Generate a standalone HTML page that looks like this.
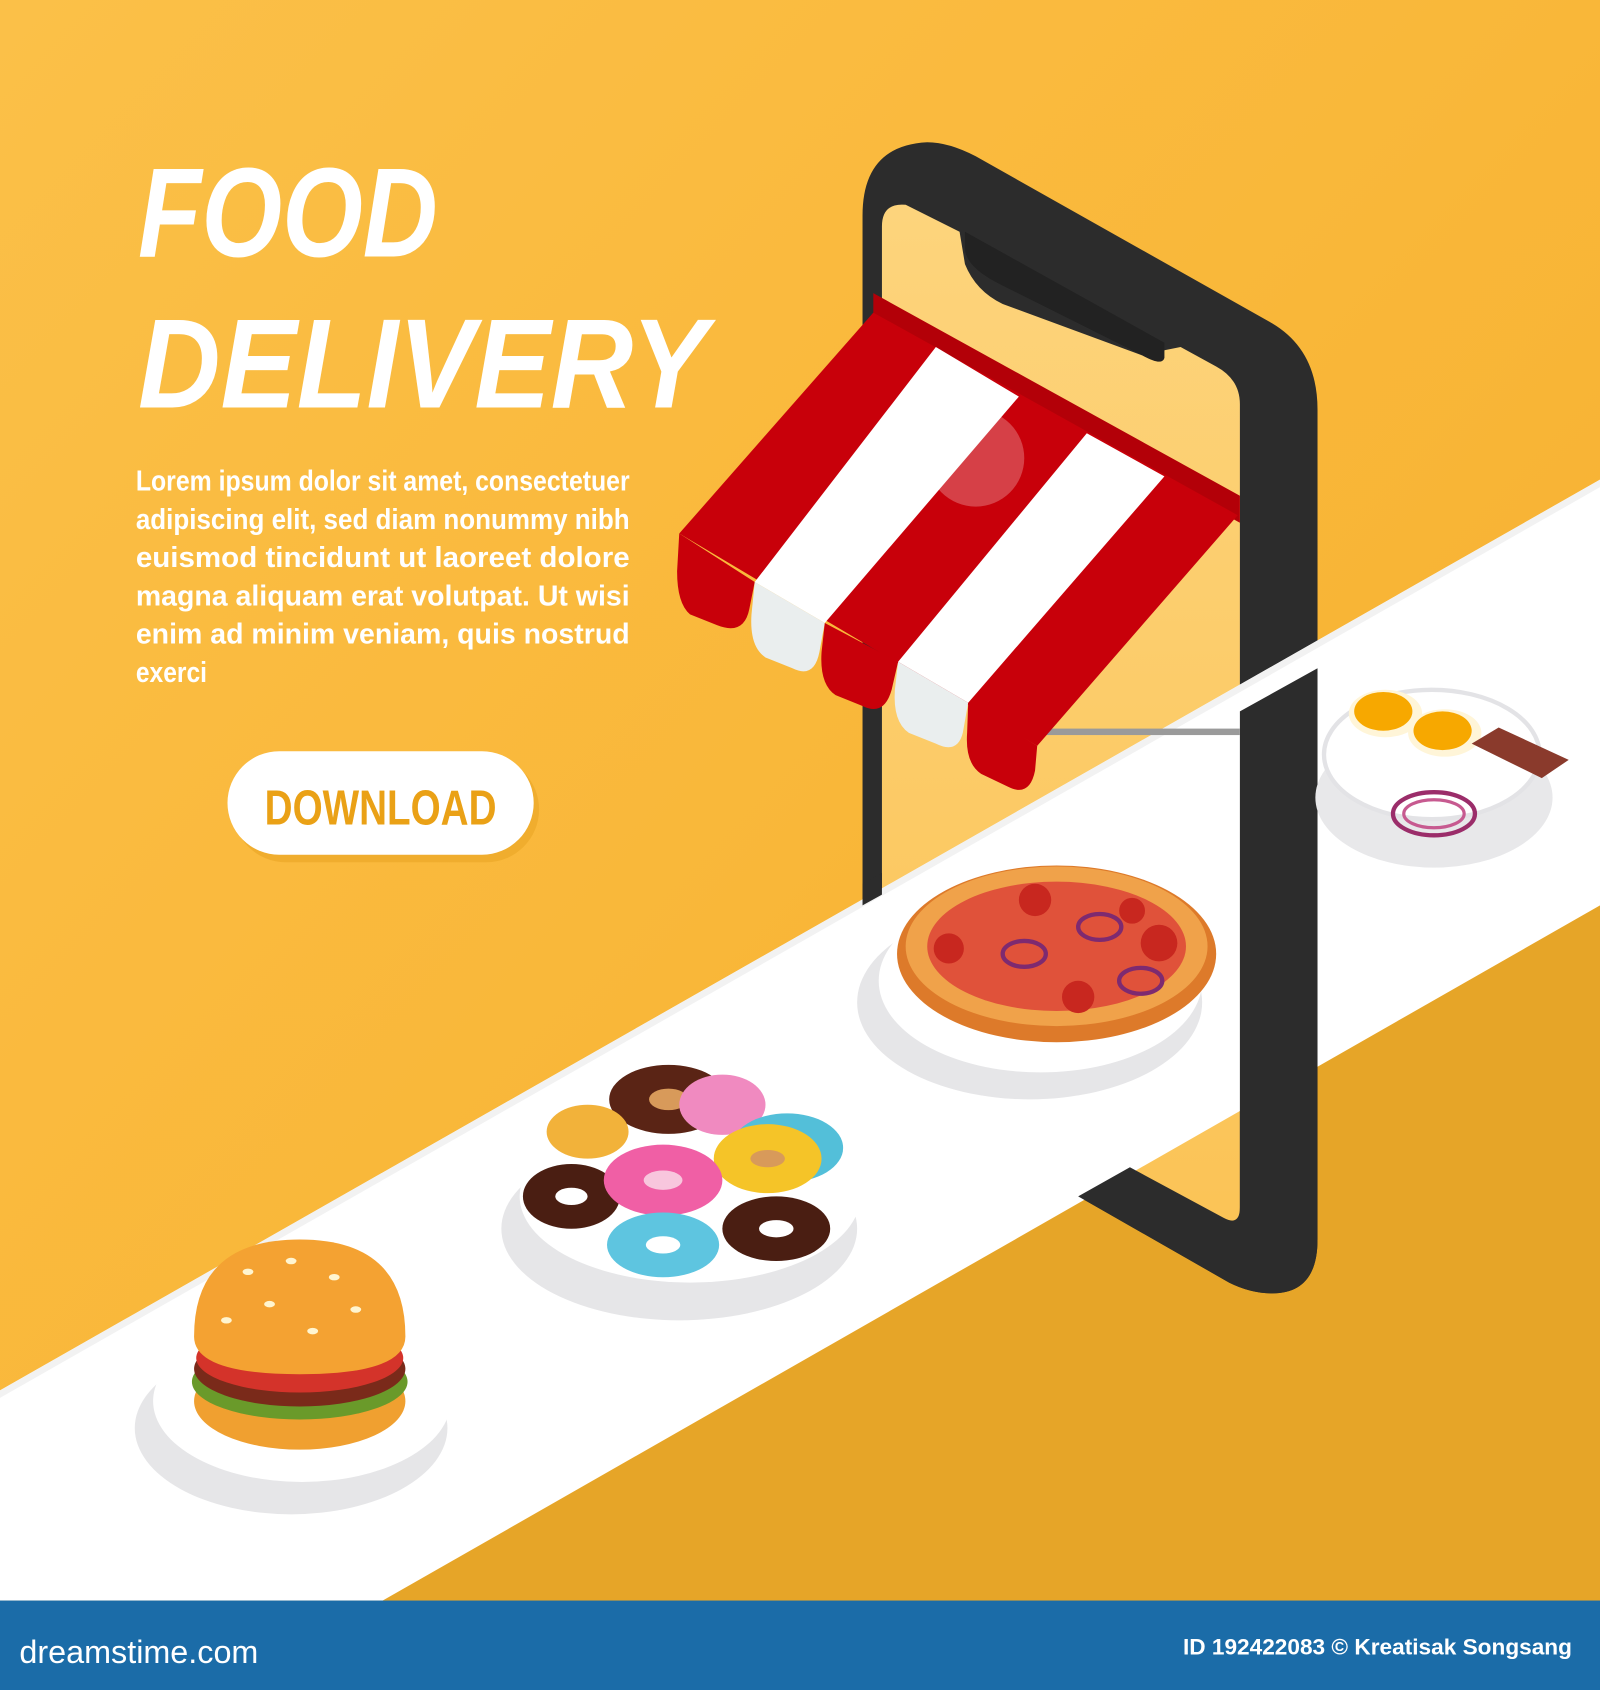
<!DOCTYPE html>
<html><head><meta charset="utf-8"><style>
html,body{margin:0;padding:0;width:1600px;height:1690px;overflow:hidden;background:#f8b739}
svg{display:block}
</style></head><body>
<svg width="1600" height="1690" viewBox="0 0 1484 1568" preserveAspectRatio="none" xmlns="http://www.w3.org/2000/svg">
<defs>
<linearGradient id="bg" x1="0" y1="0" x2="1" y2="1">
<stop offset="0" stop-color="#fbc048"/><stop offset="0.5" stop-color="#f9b739"/><stop offset="1" stop-color="#f6ad2c"/>
</linearGradient>
<linearGradient id="scr" x1="0" y1="0" x2="0" y2="1">
<stop offset="0" stop-color="#fdd47c"/><stop offset="1" stop-color="#fbc355"/>
</linearGradient>
</defs>
<rect width="1484" height="1568" fill="url(#bg)"/>
<polygon points="355,1485 1484,840 1484,1485" fill="#e6a528"/>
<path d="M800,200 Q800,135 860,132 Q880,132 905,145 L1180,300 Q1222,325 1222,380 L1222,1150 Q1222,1200 1180,1200 Q1160,1200 1140,1190 L1000,1110 L800,1000 Z" fill="#2c2c2c"/>
<path d="M818,210 Q818,188 840,190 L890,215 L895,245 Q905,270 930,282 L1060,330 Q1075,338 1080,325 L1095,322 L1128,340 Q1150,352 1150,375 L1150,1160 Q1150,1170 1135,1162 L1000,1090 L818,990 Z" fill="url(#scr)"/>
<path d="M895,215 L1080,318 L1080,332 Q1078,340 1060,330 L930,265 Q895,248 895,230 Z" fill="#222"/>
<polygon points="0,1290 1484,445 1484,840 355,1485 0,1485" fill="#ffffff"/>
<polygon points="0,1290 1484,445 1484,452 0,1297" fill="#f2f2f2"/>
<path d="M1150,660 L1222,620 L1222,1150 Q1222,1200 1180,1200 Q1160,1200 1140,1190 L1000,1110 L1048,1083 L1135,1130 Q1150,1138 1150,1120 Z" fill="#2c2c2c"/>
<path d="M800,820 L818,810 L818,830 L800,840 Z" fill="#2c2c2c"/>
<rect x="966" y="676" width="184" height="6" fill="#9a9a9a"/>
<!-- awning -->
<polygon points="810,272 1150,460 1150,485 810,297" fill="#b30008"/>
<polygon points="810,290 1148,478 962,692 630,495" fill="#c8000a"/>
<polygon points="868,322 945,368 765,578 700,540" fill="#fff"/>
<polygon points="1008,402 1080,442 898,652 833,614" fill="#fff"/>
<path d="M630,495 L700,540 L695,565 Q690,590 665,580 L640,570 Q628,560 628,530 Z" fill="#c8000a"/>
<path d="M700,540 L765,578 L760,605 Q755,630 735,620 L710,610 Q695,600 697,570 Z" fill="#eaeeee"/>
<path d="M765,578 L833,614 L827,640 Q820,665 800,655 L775,645 Q760,635 762,605 Z" fill="#c8000a"/>
<path d="M833,614 L898,652 L893,680 Q888,700 868,690 L843,680 Q828,670 830,640 Z" fill="#eaeeee"/>
<path d="M898,652 L962,692 L960,715 Q955,740 935,730 L910,718 Q895,708 897,680 Z" fill="#c8000a"/>
<circle cx="905" cy="425" r="45" fill="#fff" opacity="0.25"/>
<!-- eggs plate -->
<ellipse cx="1330" cy="740" rx="110" ry="65" fill="#e8e8ea"/>
<ellipse cx="1328" cy="700" rx="100" ry="60" fill="#fff" stroke="#e3e3e6" stroke-width="4"/>
<ellipse cx="1285" cy="662" rx="34" ry="22" fill="#fff5d8"/><ellipse cx="1283" cy="660" rx="27" ry="18" fill="#f7a800"/>
<ellipse cx="1340" cy="680" rx="34" ry="22" fill="#fff5d8"/><ellipse cx="1338" cy="678" rx="27" ry="18" fill="#f7a800"/>
<polygon points="1365,690 1390,675 1455,705 1430,722" fill="#8a3a2c"/>
<ellipse cx="1330" cy="755" rx="38" ry="20" fill="none" stroke="#9b2d6a" stroke-width="4"/>
<ellipse cx="1330" cy="755" rx="28" ry="13" fill="none" stroke="#c75a90" stroke-width="3"/>
<!-- pizza -->
<ellipse cx="955" cy="930" rx="160" ry="90" fill="#e6e6e8"/>
<ellipse cx="965" cy="910" rx="150" ry="85" fill="#fff"/>
<ellipse cx="980" cy="885" rx="148" ry="82" fill="#dd7a2a"/>
<ellipse cx="980" cy="878" rx="140" ry="74" fill="#f0a24a"/>
<ellipse cx="980" cy="878" rx="120" ry="60" fill="#e0523a"/>
<g fill="#c8271f"><circle cx="960" cy="835" r="15"/><circle cx="1075" cy="875" r="17"/><circle cx="880" cy="880" r="14"/><circle cx="1000" cy="925" r="15"/><circle cx="1050" cy="845" r="12"/></g>
<g fill="none" stroke="#7e2a70" stroke-width="4"><ellipse cx="950" cy="885" rx="20" ry="12"/><ellipse cx="1020" cy="860" rx="20" ry="12"/><ellipse cx="1058" cy="910" rx="20" ry="12"/></g>
<!-- donuts -->
<ellipse cx="630" cy="1140" rx="165" ry="85" fill="#e6e6e8"/>
<ellipse cx="640" cy="1110" rx="158" ry="80" fill="#fff"/>
<g>
<ellipse cx="620" cy="1020" rx="55" ry="32" fill="#5a2415"/><ellipse cx="620" cy="1020" rx="18" ry="10" fill="#d89a5a"/>
<ellipse cx="670" cy="1025" rx="40" ry="28" fill="#f08ac0"/>
<ellipse cx="545" cy="1050" rx="38" ry="25" fill="#f2b23a"/>
<ellipse cx="730" cy="1065" rx="52" ry="32" fill="#53bfd9"/><ellipse cx="712" cy="1075" rx="50" ry="32" fill="#f5c428"/><ellipse cx="712" cy="1075" rx="16" ry="8" fill="#d89a5a"/>
<ellipse cx="530" cy="1110" rx="45" ry="30" fill="#4a1e12"/><ellipse cx="530" cy="1110" rx="15" ry="8" fill="#fff"/>
<ellipse cx="615" cy="1095" rx="55" ry="33" fill="#f05fa5"/><ellipse cx="615" cy="1095" rx="18" ry="9" fill="#f8c6dd"/>
<ellipse cx="720" cy="1140" rx="50" ry="30" fill="#4a1e12"/><ellipse cx="720" cy="1140" rx="16" ry="8" fill="#fff"/>
<ellipse cx="615" cy="1155" rx="52" ry="30" fill="#5ec5e0"/><ellipse cx="615" cy="1155" rx="16" ry="8" fill="#fff"/>
</g>
<!-- burger -->
<ellipse cx="270" cy="1325" rx="145" ry="80" fill="#e6e6e8"/>
<ellipse cx="280" cy="1300" rx="138" ry="75" fill="#fff"/>
<ellipse cx="278" cy="1300" rx="98" ry="45" fill="#f0a030"/>
<ellipse cx="278" cy="1282" rx="100" ry="35" fill="#6a9a2a"/>
<ellipse cx="278" cy="1270" rx="98" ry="35" fill="#7a2a1a"/>
<ellipse cx="278" cy="1260" rx="96" ry="32" fill="#d4332a"/>
<path d="M180,1240 Q180,1150 278,1150 Q376,1150 376,1240 Q376,1275 278,1275 Q180,1275 180,1240 Z" fill="#f4a232"/>
<g fill="#fff5d0"><ellipse cx="230" cy="1180" rx="5" ry="3"/><ellipse cx="270" cy="1170" rx="5" ry="3"/><ellipse cx="310" cy="1185" rx="5" ry="3"/><ellipse cx="250" cy="1210" rx="5" ry="3"/><ellipse cx="330" cy="1215" rx="5" ry="3"/><ellipse cx="210" cy="1225" rx="5" ry="3"/><ellipse cx="290" cy="1235" rx="5" ry="3"/></g>
<!-- text -->
<g font-family="'Liberation Sans',sans-serif" fill="#fff" font-weight="bold" font-style="italic">
<text x="128" y="238" font-size="118" textLength="278" lengthAdjust="spacingAndGlyphs">FOOD</text>
<text x="128" y="378" font-size="118" textLength="528" lengthAdjust="spacingAndGlyphs">DELIVERY</text>
</g>
<g font-family="'Liberation Sans',sans-serif" fill="#fff" font-size="27" font-weight="bold">
<text x="126" y="455" textLength="458" lengthAdjust="spacingAndGlyphs">Lorem ipsum dolor sit amet, consectetuer</text>
<text x="126" y="491" textLength="458" lengthAdjust="spacingAndGlyphs">adipiscing elit, sed diam nonummy nibh</text>
<text x="126" y="526" textLength="458" lengthAdjust="spacingAndGlyphs">euismod tincidunt ut laoreet dolore</text>
<text x="126" y="562" textLength="458" lengthAdjust="spacingAndGlyphs">magna aliquam erat volutpat. Ut wisi</text>
<text x="126" y="597" textLength="458" lengthAdjust="spacingAndGlyphs">enim ad minim veniam, quis nostrud</text>
<text x="126" y="633" textLength="66" lengthAdjust="spacingAndGlyphs">exerci</text>
</g>
<rect x="216" y="702" width="284" height="98" rx="49" fill="#e9a524" opacity="0.6"/>
<rect x="211" y="697" width="284" height="96" rx="48" fill="#fff"/>
<text x="353" y="765" text-anchor="middle" font-family="'Liberation Sans',sans-serif" font-weight="bold" font-size="46" fill="#eaa116" textLength="215" lengthAdjust="spacingAndGlyphs">DOWNLOAD</text>
<rect x="0" y="1485" width="1484" height="83" fill="#1b6ca8"/>
<text x="18" y="1543" font-family="'Liberation Sans',sans-serif" font-size="30" fill="#fff">dreamstime.com</text>
<text x="1458" y="1535" text-anchor="end" font-family="'Liberation Sans',sans-serif" font-weight="bold" font-size="21" fill="#fff">ID 192422083 © Kreatisak Songsang</text>
</svg>
</body></html>
